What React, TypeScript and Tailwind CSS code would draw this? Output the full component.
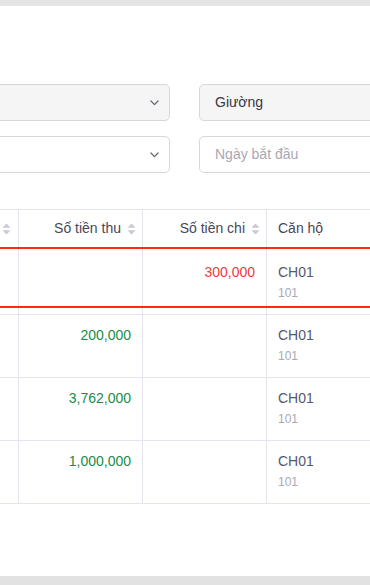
function SortIcon() {
  return (
    <svg width="9" height="12" viewBox="0 0 9 12" className="shrink-0">
      <path d="M4.5 0.5 L8.5 4.8 L0.5 4.8 Z" fill="#c9c9d2" />
      <path d="M4.5 11.5 L8.5 7.2 L0.5 7.2 Z" fill="#c9c9d2" />
    </svg>
  )
}

function Chevron() {
  return (
    <svg width="9" height="6" viewBox="0 0 9 6" className="shrink-0">
      <path d="M1 1 L4.5 4.6 L8 1" fill="none" stroke="#676776" strokeWidth="1.3" strokeLinecap="round" strokeLinejoin="round" />
    </svg>
  )
}

const rows = [
  { thu: '200,000' },
  { thu: '3,762,000' },
  { thu: '1,000,000' },
]

export default function App() {
  return (
    <div
      className="w-[370px] h-[585px] overflow-hidden bg-white flex flex-col"
      style={{ fontFamily: '"Liberation Sans", Arial, sans-serif' }}
    >
      <div className="h-[6px] bg-[#e4e4e4] shrink-0" />

      {/* filters */}
      <div className="mt-[78px] flex flex-col gap-[15px]">
        <div className="flex gap-[29px] -ml-[40px]">
          <div className="w-[210px] h-[37px] shrink-0 rounded-[5px] border border-[#d6d6dd] bg-[#f5f5f6] flex items-center justify-end pr-[10px]">
            <Chevron />
          </div>
          <div className="w-[220px] h-[37px] shrink-0 rounded-[5px] border border-[#d6d6dd] bg-[#f5f5f6] flex items-center pl-[15px] text-[14px] text-[#363646]">
            Giường
          </div>
        </div>
        <div className="flex gap-[29px] -ml-[40px]">
          <div className="w-[210px] h-[37px] shrink-0 rounded-[5px] border border-[#d6d6dd] bg-white flex items-center justify-end pr-[10px]">
            <Chevron />
          </div>
          <div className="w-[220px] h-[37px] shrink-0 rounded-[5px] border border-[#d6d6dd] bg-white flex items-center pl-[15px] text-[14px] text-[#a8a8b3]">
            Ngày bắt đầu
          </div>
        </div>
      </div>

      {/* table */}
      <div className="mt-[36px] -ml-[106px] w-[500px] text-[14px]">
        <div className="grid grid-cols-[125px_124px_124px_127px] border-t border-[#e4e4ec] h-[38px]">
          <div className="border-r border-[#e4e4ec] flex items-center justify-end pr-[7px]">
            <SortIcon />
          </div>
          <div className="border-r border-[#e4e4ec] flex items-center justify-end gap-[6px] pr-[6px] text-[#474758]">
            Số tiền thu
            <SortIcon />
          </div>
          <div className="border-r border-[#e4e4ec] flex items-center justify-end gap-[6px] pr-[6px] text-[#474758]">
            Số tiền chi
            <SortIcon />
          </div>
          <div className="flex items-center pl-[11px] text-[#474758]">Căn hộ</div>
        </div>

        {/* selected row */}
        <div className="border-y-2 border-[#ff2a10]">
          <div className="grid grid-cols-[125px_124px_124px_127px] h-[57px]">
            <div className="border-r border-[#e4e4ec]" />
            <div className="border-r border-[#e4e4ec]" />
            <div className="border-r border-[#e4e4ec] pt-[12px] pr-[11px] text-right leading-[22px] text-[#ee3a3f]">300,000</div>
            <div className="pt-[12px] pl-[11px]">
              <div className="leading-[22px] text-[#585869]">CH01</div>
              <div className="leading-[20px] text-[12px] text-[#a9a9b3]">101</div>
            </div>
          </div>
        </div>
        <div className="grid grid-cols-[125px_124px_124px_127px] h-[7px] border-b border-[#e4e4ec]">
          <div className="border-r border-[#e4e4ec]" />
          <div className="border-r border-[#e4e4ec]" />
          <div className="border-r border-[#e4e4ec]" />
          <div />
        </div>

        {rows.map((r, i) => (
          <div key={i} className="grid grid-cols-[125px_124px_124px_127px] h-[63px] border-b border-[#e4e4ec]">
            <div className="border-r border-[#e4e4ec]" />
            <div className="border-r border-[#e4e4ec] pt-[9px] pr-[11px] text-right leading-[22px] text-[#208b4a]">{r.thu}</div>
            <div className="border-r border-[#e4e4ec]" />
            <div className="pt-[9px] pl-[11px]">
              <div className="leading-[22px] text-[#585869]">CH01</div>
              <div className="leading-[20px] text-[12px] text-[#a9a9b3]">101</div>
            </div>
          </div>
        ))}
      </div>

      <div className="mt-auto h-[9px] bg-[#e2e2e2] shrink-0" />
    </div>
  )
}
